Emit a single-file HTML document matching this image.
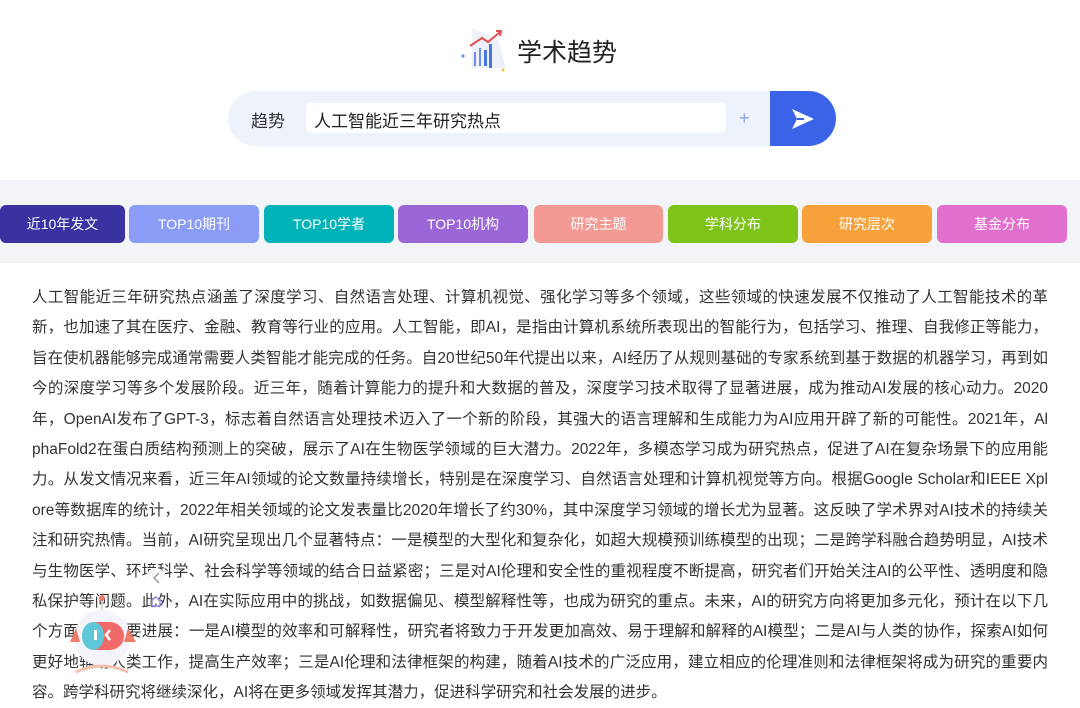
<!DOCTYPE html>
<html><head><meta charset="utf-8"><style>
body{margin:0;width:1080px;height:703px;overflow:hidden;background:#fff;font-family:"Liberation Sans","Noto Sans CJK SC",sans-serif;position:relative}
.abs{position:absolute}
.tab{position:absolute;top:205px;height:38px;border-radius:6px;color:#fff;font-size:14px;line-height:38px;text-align:center}
.txt{position:absolute;left:32px;top:283px;width:1016px;font-size:15.5px;color:#333;line-height:30.4px}
.txt div{text-align:justify;text-align-last:justify;white-space:nowrap;height:30.4px}
.txt div.l{text-align-last:left}
</style></head><body>
<svg class="abs" style="left:458px;top:24px" width="56" height="50" viewBox="0 0 56 50">
<path d="M14 4 L40 16 L48 44 L14 44Z" fill="#eef1f8"/>
<path d="M12 22 L24 14 L30 18 L42 8" stroke="#e05050" stroke-width="2" fill="none"/>
<path d="M38 7 L43 7 L42 12" stroke="#e05050" stroke-width="2" fill="none"/>
<rect x="16" y="28" width="2" height="14" fill="#6b8ee6"/><rect x="21" y="24" width="2" height="18" fill="#6b8ee6"/>
<rect x="26" y="26" width="3" height="16" fill="#4a74e0"/><rect x="31" y="20" width="3" height="24" fill="#4a74e0"/>
<circle cx="5" cy="32" r="1.6" fill="#6b8ee6"/><circle cx="45" cy="46" r="1.5" fill="#f2c24a"/>
</svg>
<div class="abs" style="left:517px;top:33px;font-size:25px;color:#222">学术趋势</div>
<div class="abs" style="left:228px;top:91px;width:600px;height:55px;background:#eef2fb;border-radius:28px"></div>
<div class="abs" style="left:251px;top:107px;font-size:17px;color:#333">趋势</div>
<div class="abs" style="left:306px;top:103px;width:420px;height:30px;background:#fff;border-radius:6px"></div>
<div class="abs" style="left:314px;top:107px;font-size:17px;color:#222">人工智能近三年研究热点</div>
<div class="abs" style="left:739px;top:108px;font-size:18px;color:#8aa0e8">+</div>
<div class="abs" style="left:770px;top:91px;width:66px;height:55px;background:#3b63e8;border-radius:0 28px 28px 0"></div>
<svg class="abs" style="left:790px;top:107px" width="26" height="24" viewBox="0 0 26 24"><path d="M2 2 L24 12 L2 22 L7 12Z" fill="#fff"/><path d="M7 12 L14 12" stroke="#3b63e8" stroke-width="2"/></svg>
<div class="abs" style="left:0;top:180px;width:1080px;height:83px;background:#f2f4f7"></div>
<div class="tab" style="left:0;width:125px;background:#3a32a0">近10年发文</div>
<div class="tab" style="left:129px;width:130px;background:#8a9cf5">TOP10期刊</div>
<div class="tab" style="left:264px;width:130px;background:#00b3b8">TOP10学者</div>
<div class="tab" style="left:398px;width:130px;background:#9b66d6">TOP10机构</div>
<div class="tab" style="left:534px;width:129px;background:#f29a93">研究主题</div>
<div class="tab" style="left:668px;width:130px;background:#7ec318">学科分布</div>
<div class="tab" style="left:802px;width:130px;background:#f6a13a">研究层次</div>
<div class="tab" style="left:937px;width:130px;background:#e06fcd">基金分布</div>
<div class="txt">
<div>人工智能近三年研究热点涵盖了深度学习、自然语言处理、计算机视觉、强化学习等多个领域，这些领域的快速发展不仅推动了人工智能技术的革</div>
<div>新，也加速了其在医疗、金融、教育等行业的应用。人工智能，即AI，是指由计算机系统所表现出的智能行为，包括学习、推理、自我修正等能力，</div>
<div>旨在使机器能够完成通常需要人类智能才能完成的任务。自20世纪50年代提出以来，AI经历了从规则基础的专家系统到基于数据的机器学习，再到如</div>
<div>今的深度学习等多个发展阶段。近三年，随着计算能力的提升和大数据的普及，深度学习技术取得了显著进展，成为推动AI发展的核心动力。2020</div>
<div>年，OpenAI发布了GPT-3，标志着自然语言处理技术迈入了一个新的阶段，其强大的语言理解和生成能力为AI应用开辟了新的可能性。2021年，Al</div>
<div>phaFold2在蛋白质结构预测上的突破，展示了AI在生物医学领域的巨大潜力。2022年，多模态学习成为研究热点，促进了AI在复杂场景下的应用能</div>
<div>力。从发文情况来看，近三年AI领域的论文数量持续增长，特别是在深度学习、自然语言处理和计算机视觉等方向。根据Google Scholar和IEEE Xpl</div>
<div>ore等数据库的统计，2022年相关领域的论文发表量比2020年增长了约30%，其中深度学习领域的增长尤为显著。这反映了学术界对AI技术的持续关</div>
<div>注和研究热情。当前，AI研究呈现出几个显著特点：一是模型的大型化和复杂化，如超大规模预训练模型的出现；二是跨学科融合趋势明显，AI技术</div>
<div>与生物医学、环境科学、社会科学等领域的结合日益紧密；三是对AI伦理和安全性的重视程度不断提高，研究者们开始关注AI的公平性、透明度和隐</div>
<div>私保护等问题。此外，AI在实际应用中的挑战，如数据偏见、模型解释性等，也成为研究的重点。未来，AI的研究方向将更加多元化，预计在以下几</div>
<div>个方面取得重要进展：一是AI模型的效率和可解释性，研究者将致力于开发更加高效、易于理解和解释的AI模型；二是AI与人类的协作，探索AI如何</div>
<div>更好地辅助人类工作，提高生产效率；三是AI伦理和法律框架的构建，随着AI技术的广泛应用，建立相应的伦理准则和法律框架将成为研究的重要内</div>
<div class="l">容。跨学科研究将继续深化，AI将在更多领域发挥其潜力，促进科学研究和社会发展的进步。</div>
</div>
<svg class="abs" style="left:70px;top:568px" width="100" height="110" viewBox="0 0 100 110">
<circle cx="86" cy="10" r="10" fill="#fff" opacity=".9"/>
<path d="M89 5 L84 10 L89 15" stroke="#999" stroke-width="1.5" fill="none"/>
<path d="M82 32 l4 -3 l4 3 v6 h-8z" fill="none" stroke="#9b8ae6" stroke-width="1.5"/>
<circle cx="32" cy="70" r="28" fill="#f4f4fa"/>
<path d="M6 60 L0 74 L10 74Z" fill="#f07a6a"/>
<path d="M58 60 L66 74 L54 74Z" fill="#f07a6a"/>
<rect x="12" y="54" width="42" height="28" rx="14" fill="#f06a6a"/>
<rect x="12" y="54" width="22" height="28" rx="14" fill="#5fc8d8"/>
<rect x="24" y="62" width="3" height="10" fill="#fff"/>
<path d="M40 62 L36 67 L40 72" stroke="#fff" stroke-width="2.5" fill="none"/>
<line x1="32" y1="42" x2="32" y2="32" stroke="#ccc" stroke-width="1.5"/>
<circle cx="32" cy="30" r="3" fill="#f07a6a"/>
<path d="M6 104 Q32 92 58 104" stroke="#f3c0b0" stroke-width="3" fill="none"/>
</svg>
</body></html>
